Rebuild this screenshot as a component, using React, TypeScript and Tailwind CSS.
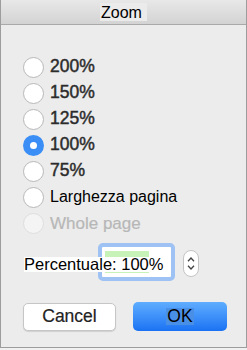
import { useState } from 'react';

const options = ['200%', '150%', '125%', '100%', '75%', 'Larghezza pagina', 'Whole page'];

const Radio = ({ checked, disabled }: { checked: boolean; disabled: boolean }) => {
  if (checked) {
    return (
      <span className="w-[21px] h-[21px] rounded-full bg-[#3a8ef6] flex items-center justify-center shrink-0">
        <span className="w-[7px] h-[7px] rounded-full bg-white" />
      </span>
    );
  }
  return (
    <span
      className={`w-[21px] h-[21px] rounded-full border-[1.5px] shrink-0 ${disabled ? 'border-[#dedede] bg-[#f4f4f4]' : 'border-[#b8b8b8] bg-white'}`}
    />
  );
};

const App = () => {
  const [selected, setSelected] = useState('100%');

  return (
    <div className="w-[247px] h-[350px] bg-[#f0f0f0]" style={{ fontFamily: '"Liberation Sans", Arial, sans-serif' }}>
      <div className="w-[247px] h-[348px] bg-[#ececec] border-x border-b border-[#9d9d9d] flex flex-col">
        {/* Title bar */}
        <div className="h-[25px] shrink-0 bg-gradient-to-b from-[#e8e8e8] to-[#d3d3d3] border-b border-[#a9a9a9] flex justify-center items-start pt-[3px]">
          <span className="bg-[#ebebeb] h-[18px] w-[47px] pl-[1px] text-[16px] leading-[19px] text-black">Zoom</span>
        </div>

        {/* Options */}
        <div className="pt-[29px] pl-[22px] flex flex-col">
          {options.map((opt, i) => {
            const disabled = opt === 'Whole page';
            const plain = i >= 5;
            return (
              <label
                key={opt}
                className="h-[26px] flex items-center gap-[6px]"
                onClick={() => !disabled && setSelected(opt)}
              >
                <Radio checked={selected === opt} disabled={disabled} />
                <span
                  className={`leading-none ${disabled ? 'text-[#b7b7b7] text-[17px] [-webkit-text-stroke:0.2px_#b7b7b7]' : plain ? 'text-black text-[16px]' : 'text-[#2b2b2b] text-[17.5px] [-webkit-text-stroke:0.45px_#2b2b2b]'}`}
                >
                  {opt}
                </span>
              </label>
            );
          })}
        </div>

        {/* Percentage */}
        <div className="mt-[7px] pl-[22px] flex items-start">
          <div className="relative flex items-start">
            <div className="ml-[75px] w-[77px] h-[38px] rounded-[5px] border-[4px] border-[#9dc2f3] bg-white relative">
              <div className="absolute left-[3px] top-[4px] w-[44px] h-[22px] bg-[#c7f3b9]" />
            </div>
            <span className="absolute left-[1px] top-[14px] h-[15px] bg-white text-black text-[16.5px] leading-[15px] pr-[1px] whitespace-nowrap">
              Percentuale: 100%
            </span>
          </div>
          <div className="ml-[8px] mt-[7px] w-[16px] h-[27px] rounded-full border border-[#c4c4c4] bg-white flex flex-col items-center justify-center gap-[3px]">
            <svg width="8" height="5" viewBox="0 0 8 5">
              <path d="M1 4.2 L4 1 L7 4.2" fill="none" stroke="#444" strokeWidth="1.3" />
            </svg>
            <svg width="8" height="5" viewBox="0 0 8 5">
              <path d="M1 0.8 L4 4 L7 0.8" fill="none" stroke="#444" strokeWidth="1.3" />
            </svg>
          </div>
        </div>

        {/* Buttons */}
        <div className="mt-[22px] pl-[22px] flex gap-[17px]">
          <button className="w-[93px] h-[28px] rounded-[5px] bg-white border border-[#c6c6c6] shadow-[0_1px_1px_rgba(0,0,0,0.12)] text-[17.5px] text-[#222] leading-none [-webkit-text-stroke:0.2px_#222]">
            Cancel
          </button>
          <button className="w-[94px] h-[29px] -mt-[1px] rounded-[5px] bg-gradient-to-b from-[#5fadff] to-[#1a72f3] text-[17.5px] text-black leading-none flex items-center justify-center">
            <span className="bg-[#4a8fe6] px-[1px]">OK</span>
          </button>
        </div>
      </div>
    </div>
  );
};

export default App;
